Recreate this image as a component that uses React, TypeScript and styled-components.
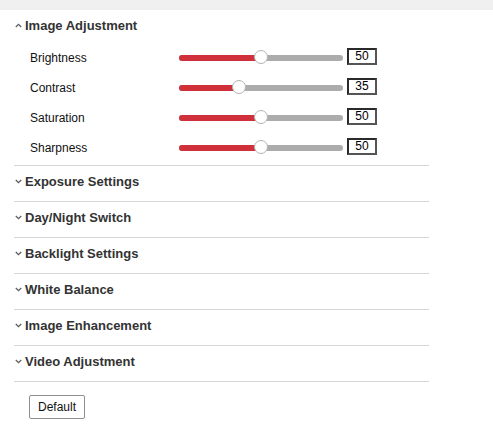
import React from 'react';
import styled, { createGlobalStyle } from 'styled-components';

const GlobalStyle = createGlobalStyle`
  html, body {
    margin: 0;
    padding: 0;
    background: #ffffff;
    font-family: "Liberation Sans", Arial, sans-serif;
  }
`;

const TopBand = styled.div`
  height: 10px;
  background: #f0f0f0;
`;

const Panel = styled.div`
  width: 415px;
  margin-left: 14px;
`;

const Section = styled.div`
  border-bottom: 1px solid #d6d6d6;
  padding-bottom: ${(p: { $open?: boolean }) => (p.$open ? '2px' : '5px')};
`;

const SectionHeader = styled.div`
  display: flex;
  align-items: center;
  height: 30px;
  font-size: 13px;
  font-weight: bold;
  color: #333;
  cursor: pointer;
`;

const Caret = styled.svg`
  width: 7px;
  height: 5px;
  margin: 0 3px 0 1px;
  flex: none;
`;

const SectionBody = styled.div`
  padding-top: 3px;
`;

const ParamRow = styled.div`
  display: flex;
  align-items: center;
  height: 30px;
  padding-left: 16px;
`;

const ParamLabel = styled.div`
  width: 149px;
  font-size: 12px;
  color: #111;
`;

const Track = styled.div`
  position: relative;
  width: 164px;
  height: 6px;
  border-radius: 3px;
  background: #acacac;
`;

const Fill = styled.div`
  height: 100%;
  border-radius: 3px 0 0 3px;
  background: #d0303a;
`;

const Thumb = styled.div`
  position: absolute;
  top: -5px;
  width: 14px;
  height: 14px;
  box-sizing: border-box;
  border-radius: 50%;
  border: 1px solid #b4b4b4;
  background: #fff;
`;

const ValueBox = styled.div`
  margin: 0 0 4px 4px;
  width: 30px;
  height: 17px;
  box-sizing: border-box;
  border: 2px solid #2a2a2a;
  border-right-color: #555;
  border-bottom-color: #555;
  font-size: 12px;
  line-height: 13px;
  text-align: center;
  color: #000;
`;

const ButtonBar = styled.div`
  padding: 13px 0 0 29px;
`;

const DefaultButton = styled.button`
  width: 56px;
  height: 24px;
  padding: 0;
  background: #fff;
  border: 1px solid #8f8f8f;
  border-radius: 2px;
  font-family: "Liberation Sans", Arial, sans-serif;
  font-size: 12px;
  color: #111;
`;

const CaretIcon = ({ up }: { up?: boolean }) => (
  <Caret viewBox="0 0 7 5">
    <path
      d={up ? 'M0.8 4 L3.5 1.3 L6.2 4' : 'M0.8 1 L3.5 3.7 L6.2 1'}
      fill="none"
      stroke="#5e5e5e"
      strokeWidth="1.3"
    />
  </Caret>
);

const Slider = ({ value }: { value: number }) => {
  const pos = value * 1.5;
  return (
    <Track>
      <Fill style={{ width: pos + 7 }} />
      <Thumb style={{ left: pos }} />
    </Track>
  );
};

const params = [
  { name: 'Brightness', value: 50 },
  { name: 'Contrast', value: 35 },
  { name: 'Saturation', value: 50 },
  { name: 'Sharpness', value: 50 },
];

const collapsed = [
  'Exposure Settings',
  'Day/Night Switch',
  'Backlight Settings',
  'White Balance',
  'Image Enhancement',
  'Video Adjustment',
];

export default function App() {
  return (
    <>
      <GlobalStyle />
      <TopBand />
      <Panel>
        <Section $open>
          <SectionHeader>
            <CaretIcon up />
            Image Adjustment
          </SectionHeader>
          <SectionBody>
            {params.map((p) => (
              <ParamRow key={p.name}>
                <ParamLabel>{p.name}</ParamLabel>
                <Slider value={p.value} />
                <ValueBox>{p.value}</ValueBox>
              </ParamRow>
            ))}
          </SectionBody>
        </Section>
        {collapsed.map((title) => (
          <Section key={title}>
            <SectionHeader>
              <CaretIcon />
              {title}
            </SectionHeader>
          </Section>
        ))}
      </Panel>
      <ButtonBar>
        <DefaultButton>Default</DefaultButton>
      </ButtonBar>
    </>
  );
}
